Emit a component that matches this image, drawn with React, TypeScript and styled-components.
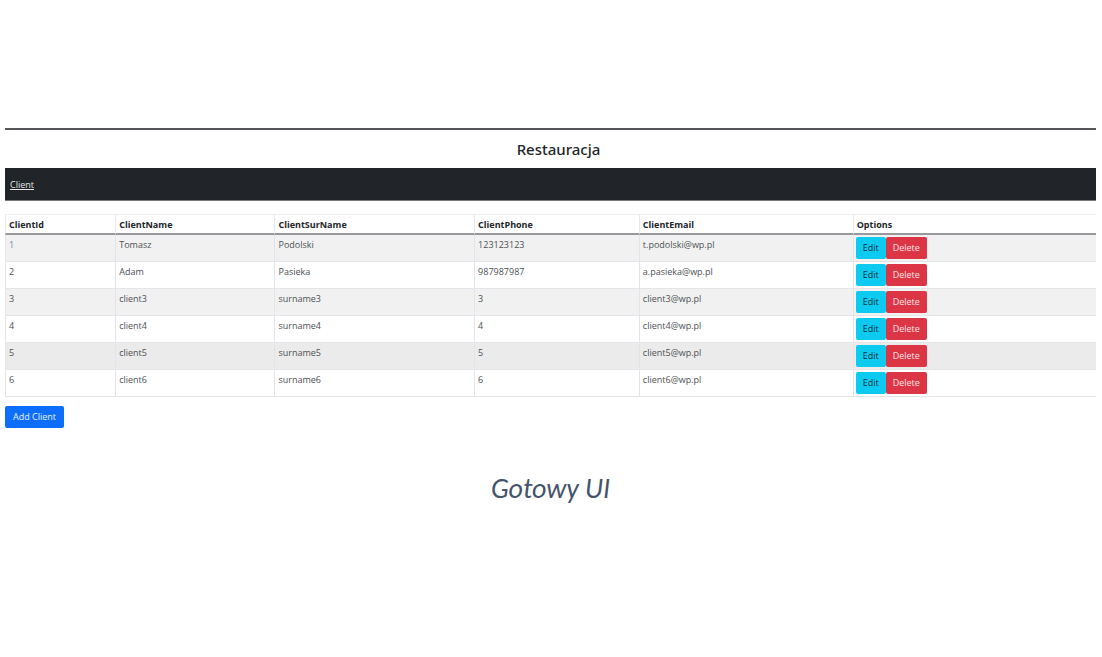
import React from "react";
import styled, { createGlobalStyle } from "styled-components";

const GlobalStyle = createGlobalStyle`
  *, *::before, *::after { box-sizing: border-box; }
  body {
    margin: 0;
    background: #fff;
    color: #212529;
    font-family: "Segoe UI", "Open Sans", "Noto Sans", sans-serif;
    font-size: 9px;
    line-height: 14px;
  }
`;

const Page = styled.div`
  padding: 128px 6px 32px 5px;
`;

const Panel = styled.main`
  border-top: 2px solid #55565a;
`;

const Title = styled.h1`
  margin: 0;
  padding: 7px 0 7px 16px;
  font-family: "Segoe UI", "Noto Sans", sans-serif;
  font-size: 15px;
  line-height: 24px;
  font-weight: 500;
  text-align: center;
`;

const Navbar = styled.nav`
  display: flex;
  align-items: center;
  height: 33px;
  padding: 2px 5px 0;
  background: #212529;
  border-bottom: 1px solid #77787b;
`;

const NavLink = styled.a`
  color: #e3e4e5;
  text-decoration: underline;
`;

const Table = styled.table`
  width: 100%;
  margin-top: 13px;
  table-layout: fixed;
  border-collapse: separate;
  border-spacing: 0;
  border-top: 1px solid #eceef0;
`;

const Col = styled.col<{ $share?: number }>`
  width: ${({ $share }) => ($share ? `${$share}%` : "auto")};
`;

const HeadCell = styled.th`
  height: 20px;
  padding: 1px 3px 0;
  border-left: 1px solid #e6e9ec;
  border-bottom: 2px solid #97989b;
  text-align: left;
  font-weight: 700;
`;

const Row = styled.tr<{ $hovered?: boolean }>`
  &:nth-child(odd) {
    background: ${({ $hovered }) => ($hovered ? "#ebebeb" : "#f1f1f1")};
  }
`;

const Cell = styled.td`
  height: 27px;
  padding: 3px 3px 0;
  border-left: 1px solid #e1e4e8;
  border-bottom: 1px solid #e3e5e8;
  color: #4d5155;
  vertical-align: top;
`;

const IdCell = styled(Cell)<{ $selected?: boolean }>`
  color: ${({ $selected }) => ($selected ? "#71889a" : "#4d5155")};
`;

const ActionCell = styled(Cell)`
  padding: 2px 2px 0;
`;

const Actions = styled.div`
  display: flex;
`;

const variants = {
  info: { background: "#0dcaf0", color: "#07323b" },
  danger: { background: "#dc3545", color: "#fbe4e6" },
  primary: { background: "#0d6efd", color: "#e8f1ff" },
};

const Button = styled.button<{ $variant: keyof typeof variants }>`
  height: 22px;
  padding: 0 7px;
  border: 0;
  border-radius: 2px;
  background: ${({ $variant }) => variants[$variant].background};
  color: ${({ $variant }) => variants[$variant].color};
  font: inherit;
  white-space: nowrap;
  cursor: pointer;
`;

const AddButton = styled(Button)`
  padding: 0 8px;
`;

const Footer = styled.div`
  display: flex;
  margin-top: 9px;
`;

const Caption = styled.p`
  margin: 43px 0 0;
  color: #44546a;
  font-family: Carlito, Lato, sans-serif;
  font-size: 28px;
  line-height: 36px;
  font-style: italic;
  text-align: center;
`;

const columns = [
  { label: "ClientId", share: 10.1 },
  { label: "ClientName", share: 14.6 },
  { label: "ClientSurName", share: 18.3 },
  { label: "ClientPhone", share: 15.1 },
  { label: "ClientEmail", share: 19.6 },
  { label: "Options" },
];

const clients = [
  { id: 1, name: "Tomasz", surname: "Podolski", phone: "123123123", email: "t.podolski@wp.pl" },
  { id: 2, name: "Adam", surname: "Pasieka", phone: "987987987", email: "a.pasieka@wp.pl" },
  { id: 3, name: "client3", surname: "surname3", phone: "3", email: "client3@wp.pl" },
  { id: 4, name: "client4", surname: "surname4", phone: "4", email: "client4@wp.pl" },
  { id: 5, name: "client5", surname: "surname5", phone: "5", email: "client5@wp.pl" },
  { id: 6, name: "client6", surname: "surname6", phone: "6", email: "client6@wp.pl" },
];

export default function App() {
  return (
    <>
      <GlobalStyle />
      <Page>
        <Panel>
          <Title>Restauracja</Title>
          <Navbar>
            <NavLink href="#client">Client</NavLink>
          </Navbar>
          <Table>
            <colgroup>
              {columns.map((c) => (
                <Col key={c.label} $share={c.share} />
              ))}
            </colgroup>
            <thead>
              <tr>
                {columns.map((c) => (
                  <HeadCell key={c.label} scope="col">{c.label}</HeadCell>
                ))}
              </tr>
            </thead>
            <tbody>
              {clients.map((c) => (
                <Row key={c.id} $hovered={c.id === 5}>
                  <IdCell $selected={c.id === 1}>{c.id}</IdCell>
                  <Cell>{c.name}</Cell>
                  <Cell>{c.surname}</Cell>
                  <Cell>{c.phone}</Cell>
                  <Cell>{c.email}</Cell>
                  <ActionCell>
                    <Actions>
                      <Button type="button" $variant="info">Edit</Button>
                      <Button type="button" $variant="danger">Delete</Button>
                    </Actions>
                  </ActionCell>
                </Row>
              ))}
            </tbody>
          </Table>
          <Footer>
            <AddButton type="button" $variant="primary">Add Client</AddButton>
          </Footer>
        </Panel>
        <Caption>Gotowy UI</Caption>
      </Page>
    </>
  );
}
